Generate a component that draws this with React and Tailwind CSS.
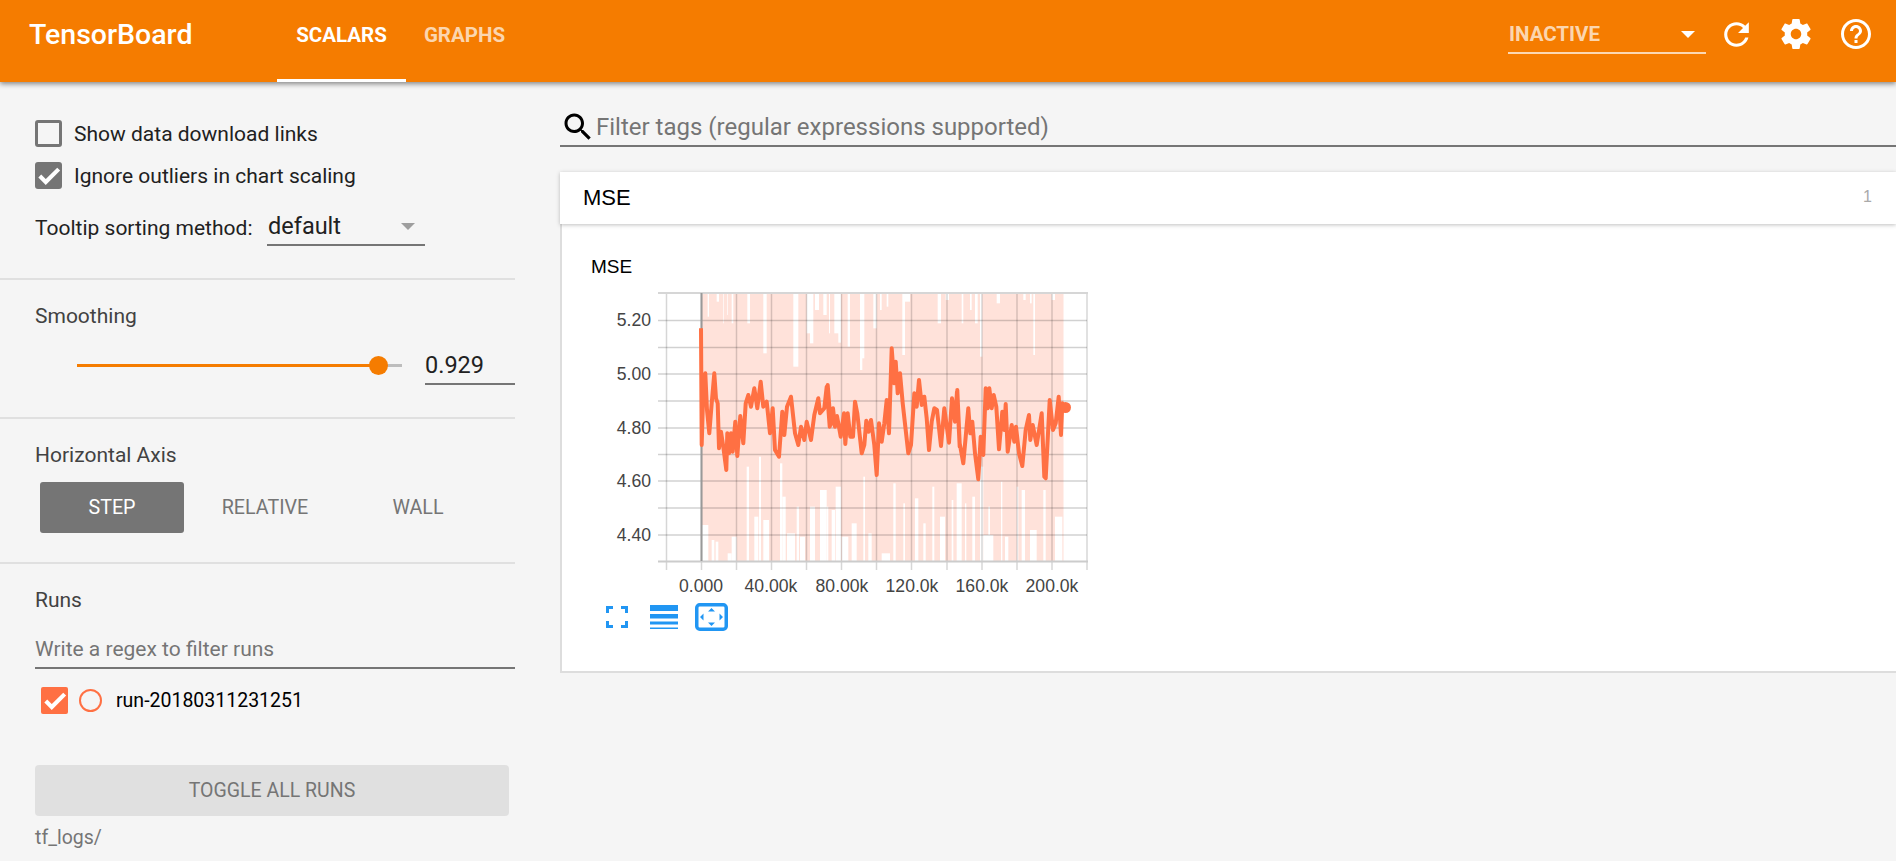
import React from 'react';

const RUN = '#ff7043';

// smoothed line, traced from three crops: [base x, [zoomX, zoomY, ...]]
const TRACE = [
  [695, [18,115,20,465,24,330,31,250,36,360,43,430,50,340,58,250,63,325,68,340,72,475,78,425,85,470,94,540,97,430,102,490,108,430,113,485,121,395,127,498,136,378,145,460,152,340,160,315,168,350,178,295,187,355,197,275,205,350,215,335,225,430,233,355,240,480,252,500,262,365,268,435,276,350,288,320,300,430,310,465,318,410,328,450,335,395,348,450,358,375,370,325,375,370,388,355,395,290,404,410]],
  [825, [8,285,17,405,24,355,30,410,36,378,47,440,57,370,61,462,68,370,76,440,84,440,90,335,97,370,110,490,118,465,124,392,131,425,138,390,148,465,155,555,162,400,170,455,178,400,185,330,192,430,200,175,208,280,212,215,218,310,225,250,233,340,250,490,258,465,268,310,275,350,282,270,290,345,298,320,305,385,312,480,320,395,328,355,336,360,348,468,358,355,372,458,381,325,390,395,396,305,404,470]],
  [955, [7,300,14,460,25,520,32,440,40,355,46,430,52,395,60,490,70,568,77,440,85,495,92,295,98,355,103,295,110,355,116,315,124,350,132,478,142,365,148,420,152,342,158,485,170,405,178,455,183,410,192,490,202,528,212,420,222,375,226,450,233,405,245,465,260,370,268,560,272,565,284,330,294,420,302,400,311,320,318,435,322,340,332,353]],
];

const linePoints = TRACE.flatMap(([base, pts]) => {
  const out = [];
  for (let i = 0; i < pts.length; i += 2) {
    out.push(`${(base + pts[i] / 3).toFixed(1)},${(290 + pts[i + 1] / 3).toFixed(1)}`);
  }
  return out;
}).join(' ');

// white gaps in the raw-values band: [base x, x0, x1, zoomY]
const TOP_GAPS = [
  [695,20,22,20],[695,38,42,80],[695,65,72,35],[695,84,86,100],[695,96,98,75],[695,110,115,100],[695,157,165,100],[695,205,215,190],[695,295,310,230],[695,335,345,130],[695,345,355,160],[695,360,372,60],[695,385,395,75],
  [825,12,15,130],[825,28,48,130],[825,40,48,158],[825,68,75,170],[825,108,118,205],[825,105,112,240],[825,145,155,115],[825,165,170,60],[825,185,190,50],[825,232,240,195],[825,240,255,35],[825,338,348,100],[825,362,372,30],
  [955,20,25,100],[955,45,50,60],[955,60,68,100],[955,75,82,200],[955,125,135,40],[955,205,212,30],[955,225,230,40],[955,235,240,195],[955,290,300,30],
];
const BOTTOM_GAPS = [
  [695,20,40,705],[695,50,58,750],[695,62,70,755],[695,98,110,790],[695,110,125,740],[695,155,162,530],[695,178,190,680],[695,192,198,500],[695,205,222,690],[695,255,262,520],[695,262,272,620],[695,276,300,730],[695,305,312,650],[695,315,330,740],[695,345,360,650],[695,375,395,600],
  [825,5,10,650],[825,20,30,660],[825,32,48,590],[825,50,70,740],[825,80,95,700],[825,115,120,560],[825,130,140,730],[825,170,195,790],[825,205,212,580],[825,235,240,640],[825,270,280,625],[825,295,302,700],[825,322,328,590],[825,345,360,680],[825,380,385,630],[825,400,404,740],
  [955,5,20,580],[955,30,34,640],[955,52,60,620],[955,75,85,530],[955,85,115,735],[955,100,105,650],[955,138,142,575],[955,150,160,740],[955,185,190,590],[955,200,210,600],[955,225,245,720],[955,265,272,600],[955,300,322,680],
];

const X_GRID = [666.5, 701.5, 736.5, 771.5, 806.5, 841.5, 876.5, 911.5, 947, 982, 1017, 1052, 1087];
const Y_GRID = [320.5, 347.5, 374, 401, 428, 454.5, 481, 508, 535];
const Y_LABELS = [['5.20', 320.5], ['5.00', 374], ['4.80', 428], ['4.60', 481], ['4.40', 535]];
const X_LABELS = [['0.000', 701], ['40.00k', 771], ['80.00k', 842], ['120.0k', 912], ['160.0k', 982], ['200.0k', 1052]];

function ScalarChart() {
  return (
    <svg width="510" height="315" viewBox="590 285 510 315" className="block mt-[7px]">
      <rect x="701.5" y="294" width="362" height="267" fill="#ffe2da" />
      {TOP_GAPS.map(([b, x0, x1, y], i) => (
        <rect key={i} x={b + x0 / 3} y="294" width={(x1 - x0) / 3} height={290 + y / 3 - 294} fill="#fff" />
      ))}
      {BOTTOM_GAPS.map(([b, x0, x1, y], i) => (
        <rect key={i} x={b + x0 / 3} y={290 + y / 3} width={(x1 - x0) / 3} height={561 - (290 + y / 3)} fill="#fff" />
      ))}
      {X_GRID.map((x) => (
        <line key={x} x1={x} x2={x} y1="293" y2="570" stroke="#000" strokeOpacity="0.16" strokeWidth="1.5" />
      ))}
      {Y_GRID.map((y) => (
        <line key={y} x1="658" x2="1087" y1={y} y2={y} stroke="#000" strokeOpacity="0.18" strokeWidth="1.5" />
      ))}
      <line x1="658" x2="1088" y1="293" y2="293" stroke="#d6d6d6" strokeWidth="2" />
      <line x1="658" x2="1088" y1="561.5" y2="561.5" stroke="#ccc" strokeWidth="2" />
      <line x1="701.5" x2="701.5" y1="293" y2="561" stroke="#999" strokeWidth="2" />
      <polyline points={linePoints} fill="none" stroke={RUN} strokeWidth="4" strokeLinejoin="round" />
      <circle cx="1065.5" cy="407.5" r="5.5" fill={RUN} />
      <g fontFamily="'Liberation Sans', sans-serif" fontSize="17.6" fill="#444">
        {Y_LABELS.map(([t, y]) => (
          <text key={t} x="651" y={y + 5.5} textAnchor="end">{t}</text>
        ))}
        {X_LABELS.map(([t, x]) => (
          <text key={t} x={x} y="592" textAnchor="middle">{t}</text>
        ))}
      </g>
    </svg>
  );
}

function CheckMark() {
  return (
    <svg viewBox="0 0 24 24" className="w-[26px] h-[26px]" fill="#fff">
      <path d="M9 16.17 4.83 12l-1.42 1.41L9 19 21 7l-1.41-1.41z" stroke="#fff" strokeWidth="1.8" />
    </svg>
  );
}

function Arrow({ className }) {
  return <div className={`w-0 h-0 border-x-[7.5px] border-x-transparent border-t-[7.5px] ${className}`} />;
}

function Header() {
  return (
    <header className="h-[82px] shrink-0 bg-[#f57c00] flex items-start text-white relative z-10 shadow-[0_2px_5px_rgba(0,0,0,0.45)]">
      <div className="ml-[29px] w-[248px] h-[70px] flex items-center text-[28.5px] font-medium">TensorBoard</div>
      <div className="w-[129px] h-[82px] border-b-[3px] border-white pb-[8px] flex items-center justify-center text-[20.5px] font-bold">SCALARS</div>
      <div className="w-[117px] h-[71px] flex items-center justify-center text-[20.5px] font-bold text-white/70">GRAPHS</div>
      <div className="ml-auto mt-[14px] w-[198px] h-[40px] border-b-2 border-white/70 flex items-center justify-between pt-[3px] pr-[11px] pl-px text-[20.5px] font-bold text-white/70">
        <span>INACTIVE</span>
        <Arrow className="border-t-white" />
      </div>
      <div className="flex items-center h-[68px] pr-[10px]">
        <button className="w-[60px] flex justify-center">
          <svg viewBox="0 0 24 24" className="w-[37px] h-[37px]" fill="#fff">
            <path d="M17.65 6.35C16.2 4.9 14.21 4 12 4c-4.42 0-7.99 3.58-7.99 8s3.57 8 7.99 8c3.73 0 6.84-2.55 7.73-6h-2.08c-.82 2.33-3.04 4-5.65 4-3.31 0-6-2.69-6-6s2.69-6 6-6c1.66 0 3.14.69 4.22 1.78L13 11h7V4l-2.35 2.35z" />
          </svg>
        </button>
        <button className="w-[60px] flex justify-center">
          <svg viewBox="0 0 24 24" className="w-[36px] h-[36px]" fill="#fff">
            <path d="M19.43 12.98c.04-.32.07-.64.07-.98s-.03-.66-.07-.98l2.11-1.65c.19-.15.24-.42.12-.64l-2-3.46c-.12-.22-.39-.3-.61-.22l-2.49 1c-.52-.4-1.08-.73-1.69-.98l-.38-2.65C14.46 2.18 14.25 2 14 2h-4c-.25 0-.46.18-.49.42l-.38 2.65c-.61.25-1.17.59-1.69.98l-2.49-1c-.23-.09-.49 0-.61.22l-2 3.46c-.13.22-.07.49.12.64l2.11 1.65c-.04.32-.07.65-.07.98s.03.66.07.98l-2.11 1.65c-.19.15-.24.42-.12.64l2 3.46c.12.22.39.3.61.22l2.49-1c.52.4 1.08.73 1.69.98l.38 2.65c.03.24.24.42.49.42h4c.25 0 .46-.18.49-.42l.38-2.65c.61-.25 1.17-.59 1.69-.98l2.49 1c.23.09.49 0 .61-.22l2-3.46c.12-.22.07-.49-.12-.64l-2.11-1.65zM12 15.5c-1.93 0-3.5-1.57-3.5-3.5s1.57-3.5 3.5-3.5 3.5 1.57 3.5 3.5-1.57 3.5-3.5 3.5z" />
          </svg>
        </button>
        <button className="w-[60px] flex justify-center">
          <svg viewBox="0 0 24 24" className="w-[36px] h-[36px]" fill="#fff">
            <path d="M11 18h2v-2h-2v2zm1-16C6.48 2 2 6.48 2 12s4.48 10 10 10 10-4.48 10-10S17.52 2 12 2zm0 18c-4.41 0-8-3.59-8-8s3.59-8 8-8 8 3.59 8 8-3.59 8-8 8zm0-14c-2.21 0-4 1.79-4 4h2c0-1.1.9-2 2-2s2 .9 2 2c0 2-3 1.75-3 5h2c0-2.25 3-2.5 3-5 0-2.21-1.79-4-4-4z" />
          </svg>
        </button>
      </div>
    </header>
  );
}

function Sidebar() {
  return (
    <aside className="w-[515px] shrink-0 flex flex-col text-[21px] leading-[24px]">
      <section className="h-[198px] border-b-2 border-[#e0e0e0] pl-[35px] pt-[38px]">
        <label className="flex items-center gap-[12px] h-[27px] text-[#212121]">
          <span className="w-[27px] h-[27px] rounded-[3px] border-[3px] border-[#757575]" />
          Show data download links
        </label>
        <label className="flex items-center gap-[12px] h-[27px] mt-[15px] text-[#212121]">
          <span className="w-[27px] h-[27px] rounded-[3px] bg-[#757575] flex items-center justify-center"><CheckMark /></span>
          Ignore outliers in chart scaling
        </label>
        <div className="flex items-start mt-[15px] text-[#212121]">
          <span className="w-[232px] pt-[12px]">Tooltip sorting method:</span>
          <div className="w-[158px] h-[42px] border-b-2 border-[#757575] flex items-center justify-between pt-[4px] pl-px pr-[10px] text-[23.5px]">
            <span>default</span>
            <Arrow className="border-t-[#9e9e9e]" />
          </div>
        </div>
      </section>

      <section className="h-[139px] border-b-2 border-[#e0e0e0] pl-[35px] pt-[24px]">
        <div className="text-[#424242]">Smoothing</div>
        <div className="flex items-start">
          <div className="ml-[42px] mt-[36px] w-[325px] h-[3px] bg-[#bdbdbd] relative">
            <div className="w-[301px] h-[3px] bg-[#f57c00]" />
            <div className="absolute left-[292px] -top-[8px] w-[19px] h-[19px] rounded-full bg-[#f57c00]" />
          </div>
          <div className="ml-[23px] mt-[14px] w-[90px] h-[43px] border-b-2 border-[#757575] pt-[11px] text-[23.5px] text-[#212121]">0.929</div>
        </div>
      </section>

      <section className="h-[145px] border-b-2 border-[#e0e0e0] pl-[35px] pt-[24px]">
        <div className="text-[#424242]">Horizontal Axis</div>
        <div className="flex gap-[9px] ml-[5px] mt-[15px] text-[19.7px] text-[#757575]">
          <div className="w-[144px] h-[51px] rounded-[3px] bg-[#757575] text-white flex items-center justify-center">STEP</div>
          <div className="w-[144px] h-[51px] flex items-center justify-center">RELATIVE</div>
          <div className="w-[144px] h-[51px] flex items-center justify-center">WALL</div>
        </div>
      </section>

      <section className="pl-[35px] pt-[24px]">
        <div className="text-[#424242]">Runs</div>
        <div className="h-[43px] mt-[14px] border-b-2 border-[#757575] pt-[11px] text-[#757575]">Write a regex to filter runs</div>
        <div className="flex items-center h-[27px] mt-[18px] ml-[6px] text-[19.5px] text-black">
          <span className="w-[27px] h-[27px] rounded-[2px] bg-[#ff7043] flex items-center justify-center"><CheckMark /></span>
          <span className="ml-[11px] w-[23px] h-[23px] rounded-full border-[2.5px] border-[#ff7043]" />
          <span className="ml-[14px]">run-20180311231251</span>
        </div>
        <div className="mt-[51px] w-[474px] h-[51px] rounded-[4px] bg-[#e0e0e0] flex items-center justify-center text-[19.5px] text-[#757575]">TOGGLE ALL RUNS</div>
        <div className="mt-[10px] text-[19.5px] text-[#757575]">tf_logs/</div>
      </section>
    </aside>
  );
}

function ChartActions() {
  return (
    <div className="flex items-center ml-[16px] mt-[3px]" >
      <svg width="22" height="22" viewBox="0 0 22 22" fill="none" stroke="#2196f3" strokeWidth="3">
        <path d="M1.5 7V1.5H7M15 1.5h5.5V7M20.5 15v5.5H15M7 20.5H1.5V15" />
      </svg>
      <svg width="28" height="24" viewBox="0 0 28 24" className="ml-[22px]" fill="#2196f3">
        <rect y="0" width="28" height="6" />
        <rect y="9" width="28" height="4.5" />
        <rect y="16.5" width="28" height="3" />
        <rect y="22.5" width="28" height="1.5" />
      </svg>
      <svg width="33" height="28" viewBox="0 0 33 28" className="ml-[17px]" fill="#2196f3">
        <rect x="1.75" y="1.75" width="29.5" height="24.5" rx="3" fill="none" stroke="#2196f3" strokeWidth="3.5" />
        <path d="M16.5 5l3.5 3.5h-7zM16.5 23l3.5-3.5h-7zM5 14l3.5-3.5v7zM28 14l-3.5-3.5v7z" />
      </svg>
    </div>
  );
}

export default function App() {
  return (
    <div className="h-screen overflow-hidden bg-[#f5f5f5] flex flex-col font-['Roboto',sans-serif]">
      <Header />
      <div className="flex flex-1 min-h-0">
        <Sidebar />
        <main className="flex-1 min-w-0 pl-[45px]">
          <div className="mt-[26px] h-[39px] border-b-2 border-[#757575] flex items-center">
            <svg viewBox="0 0 24 24" className="w-[36px] h-[36px]" fill="#000">
              <path d="M15.5 14h-.79l-.28-.27C15.41 12.59 16 11.11 16 9.5 16 5.91 13.09 3 9.5 3S3 5.91 3 9.5 5.91 16 9.5 16c1.61 0 3.09-.59 4.23-1.57l.27.28v.79l5 4.99L20.49 19l-4.99-5zm-6 0C7.01 14 5 11.99 5 9.5S7.01 5 9.5 5 14 7.01 14 9.5 11.99 14 9.5 14z" />
            </svg>
            <span className="text-[24px] text-[#757575]">Filter tags (regular expressions supported)</span>
          </div>
          <div className="mt-[25px] h-[52px] bg-white flex items-center justify-between pl-[23px] pr-[24px] pb-[2px] relative shadow-[0_1px_4px_rgba(0,0,0,0.25)] font-['Liberation_Sans',sans-serif] text-[22px] text-black">
            <span>MSE</span>
            <span className="text-[16px] text-[#aaa]">1</span>
          </div>
          <div className="h-[449px] bg-white border-l-2 border-b-2 border-[#ddd] pl-[28px] pt-[32px]">
            <div className="font-['Liberation_Sans',sans-serif] text-[19px] leading-[22px] text-black ml-[1px]">MSE</div>
            <ScalarChart />
            <ChartActions />
          </div>
        </main>
      </div>
    </div>
  );
}
